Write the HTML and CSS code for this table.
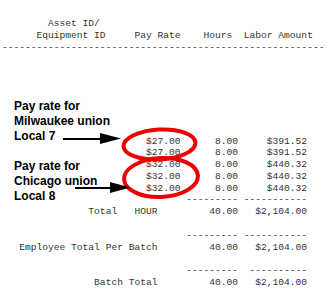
FILE: index.html
```html
<!DOCTYPE html>
<html>
<head>
<meta charset="utf-8">
<link rel="stylesheet" href="styles.css">
</head>
<body>
<div class="sheet">
<pre class="report">        Asset ID/
      Equipment ID     Pay Rate    Hours  Labor Amount
--------------------------------------------------------







                         $27.00      8.00     $391.52
                         $27.00      8.00     $391.52
                         $32.00      8.00     $440.32
                         $32.00      8.00     $440.32
                         $32.00      8.00     $440.32
                                --------- -----------
               Total   HOUR         40.00   $2,104.00

                                --------- -----------
   Employee Total Per Batch         40.00   $2,104.00

                                ---------  ----------
                Batch Total         40.00   $2,104.00</pre>

<div class="note note-mke">Pay rate for<br>Milwaukee union<br>Local 7</div>
<div class="note note-chi">Pay rate for<br>Chicago union<br>Local 8</div>

<svg class="marks" width="332" height="308" viewBox="0 0 332 308">
  <ellipse cx="159.5" cy="144.5" rx="36" ry="15" fill="none" stroke="#ee0000" stroke-width="4" transform="rotate(-3 159.5 144.5)"/>
  <ellipse cx="161" cy="177.5" rx="37" ry="19.5" fill="none" stroke="#ee0000" stroke-width="4" transform="rotate(-3 161 177.5)"/>
  <line x1="63" y1="139" x2="104" y2="139" stroke="#000" stroke-width="2"/>
  <polygon points="100,133 121,138.5 100,144" fill="#000"/>
  <line x1="75" y1="188" x2="114" y2="188" stroke="#000" stroke-width="2"/>
  <polygon points="110,182 130,187.5 110,193" fill="#000"/>
</svg>
</div>
</body>
</html>
```

FILE: styles.css
```css
html, body {
  margin: 0;
  padding: 0;
  background: #ffffff;
}

.sheet {
  position: relative;
  width: 332px;
  height: 308px;
  overflow: hidden;
}

.report {
  margin: 0;
  padding: 18px 0 0 2px;
  font-family: "Liberation Mono", "Courier New", monospace;
  font-size: 9.6px;
  line-height: 11.77px;
  color: #333333;
  white-space: pre;
}

.note {
  position: absolute;
  left: 14px;
  font-family: "Liberation Sans", Arial, sans-serif;
  font-weight: bold;
  font-size: 12px;
  line-height: 15px;
  color: #000000;
}

.note-mke {
  top: 99px;
}

.note-chi {
  top: 159px;
}

.marks {
  position: absolute;
  left: 0;
  top: 0;
}
```
